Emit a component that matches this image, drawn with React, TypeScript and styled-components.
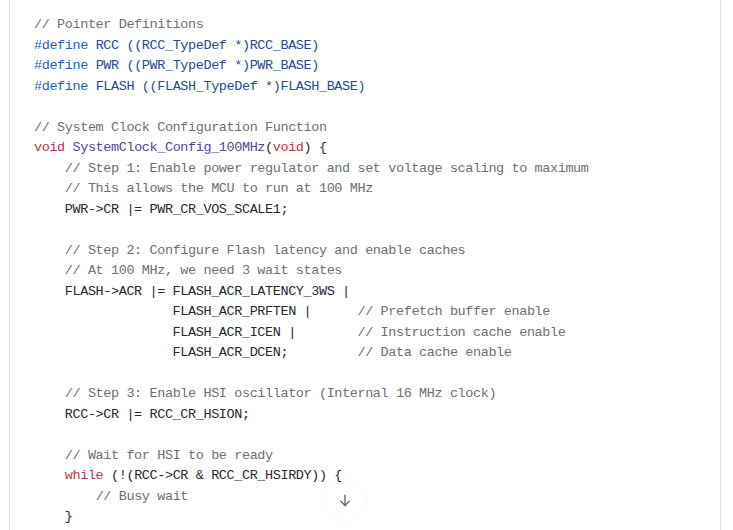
import React from "react";
import styled, { createGlobalStyle } from "styled-components";

const Global = createGlobalStyle`
  html, body { margin: 0; padding: 0; background: #ffffff; }
  body { width: 733px; height: 530px; overflow: hidden; }
`;

const Page = styled.div`
  position: relative;
  width: 733px;
  height: 530px;
  padding-left: 9px;
  box-sizing: border-box;
  overflow: hidden;
`;

const CodeBlock = styled.div`
  width: 712px;
  height: 560px;
  box-sizing: border-box;
  border-left: 1px solid #e3e3e3;
  border-right: 1px solid #e3e3e3;
  background: #ffffff;
  padding: 15px 0 0 24px;
`;

const Pre = styled.pre`
  margin: 0;
  font-family: "Liberation Mono", "DejaVu Sans Mono", monospace;
  font-size: 13.5px;
  letter-spacing: -0.4px;
  line-height: 20.5px;
  color: #262a30;
  white-space: pre;
`;

const Line = styled.div`
  height: 20.5px;
`;

const Comment = styled.span`
  color: #6b7077;
`;
const Meta = styled.span`
  color: #1d5fb5;
`;
const MetaText = styled.span`
  color: #284a8f;
`;
const Keyword = styled.span`
  color: #c2314b;
`;
const Fn = styled.span`
  color: #54459c;
`;

const ScrollButton = styled.div`
  position: absolute;
  left: 327px;
  top: 482px;
  width: 36px;
  height: 36px;
  border-radius: 50%;
  background: rgba(255, 255, 255, 0.9);
  box-shadow: 0 0 16px rgba(0, 0, 0, 0.04);
  display: flex;
  align-items: center;
  justify-content: center;
  color: #666;
`;

const Arrow = () => (
  <svg width="12" height="13" viewBox="0 0 12 13" fill="none" stroke="currentColor" strokeWidth="1.4" strokeLinecap="round" strokeLinejoin="round">
    <path d="M6 1.5v10" />
    <path d="M1.8 7.3L6 11.5l4.2-4.2" />
  </svg>
);

export default function App() {
  return (
    <>
      <Global />
      <Page>
        <CodeBlock>
          <Pre>
            <Line><Comment>// Pointer Definitions</Comment></Line>
            <Line><Meta>#define</Meta> <MetaText>RCC ((RCC_TypeDef *)RCC_BASE)</MetaText></Line>
            <Line><Meta>#define</Meta> <MetaText>PWR ((PWR_TypeDef *)PWR_BASE)</MetaText></Line>
            <Line><Meta>#define</Meta> <MetaText>FLASH ((FLASH_TypeDef *)FLASH_BASE)</MetaText></Line>
            <Line>{" "}</Line>
            <Line><Comment>// System Clock Configuration Function</Comment></Line>
            <Line><Keyword>void</Keyword> <Fn>SystemClock_Config_100MHz</Fn>(<Keyword>void</Keyword>) {"{"}</Line>
            <Line>{"    "}<Comment>// Step 1: Enable power regulator and set voltage scaling to maximum</Comment></Line>
            <Line>{"    "}<Comment>// This allows the MCU to run at 100 MHz</Comment></Line>
            <Line>{"    PWR->CR |= PWR_CR_VOS_SCALE1;"}</Line>
            <Line>{" "}</Line>
            <Line>{"    "}<Comment>// Step 2: Configure Flash latency and enable caches</Comment></Line>
            <Line>{"    "}<Comment>// At 100 MHz, we need 3 wait states</Comment></Line>
            <Line>{"    FLASH->ACR |= FLASH_ACR_LATENCY_3WS |"}</Line>
            <Line>{"                  FLASH_ACR_PRFTEN |      "}<Comment>// Prefetch buffer enable</Comment></Line>
            <Line>{"                  FLASH_ACR_ICEN |        "}<Comment>// Instruction cache enable</Comment></Line>
            <Line>{"                  FLASH_ACR_DCEN;         "}<Comment>// Data cache enable</Comment></Line>
            <Line>{" "}</Line>
            <Line>{"    "}<Comment>// Step 3: Enable HSI oscillator (Internal 16 MHz clock)</Comment></Line>
            <Line>{"    RCC->CR |= RCC_CR_HSION;"}</Line>
            <Line>{" "}</Line>
            <Line>{"    "}<Comment>// Wait for HSI to be ready</Comment></Line>
            <Line>{"    "}<Keyword>while</Keyword>{" (!(RCC->CR & RCC_CR_HSIRDY)) {"}</Line>
            <Line>{"        "}<Comment>// Busy wait</Comment></Line>
            <Line>{"    }"}</Line>
          </Pre>
        </CodeBlock>
        <ScrollButton>
          <Arrow />
        </ScrollButton>
      </Page>
    </>
  );
}
